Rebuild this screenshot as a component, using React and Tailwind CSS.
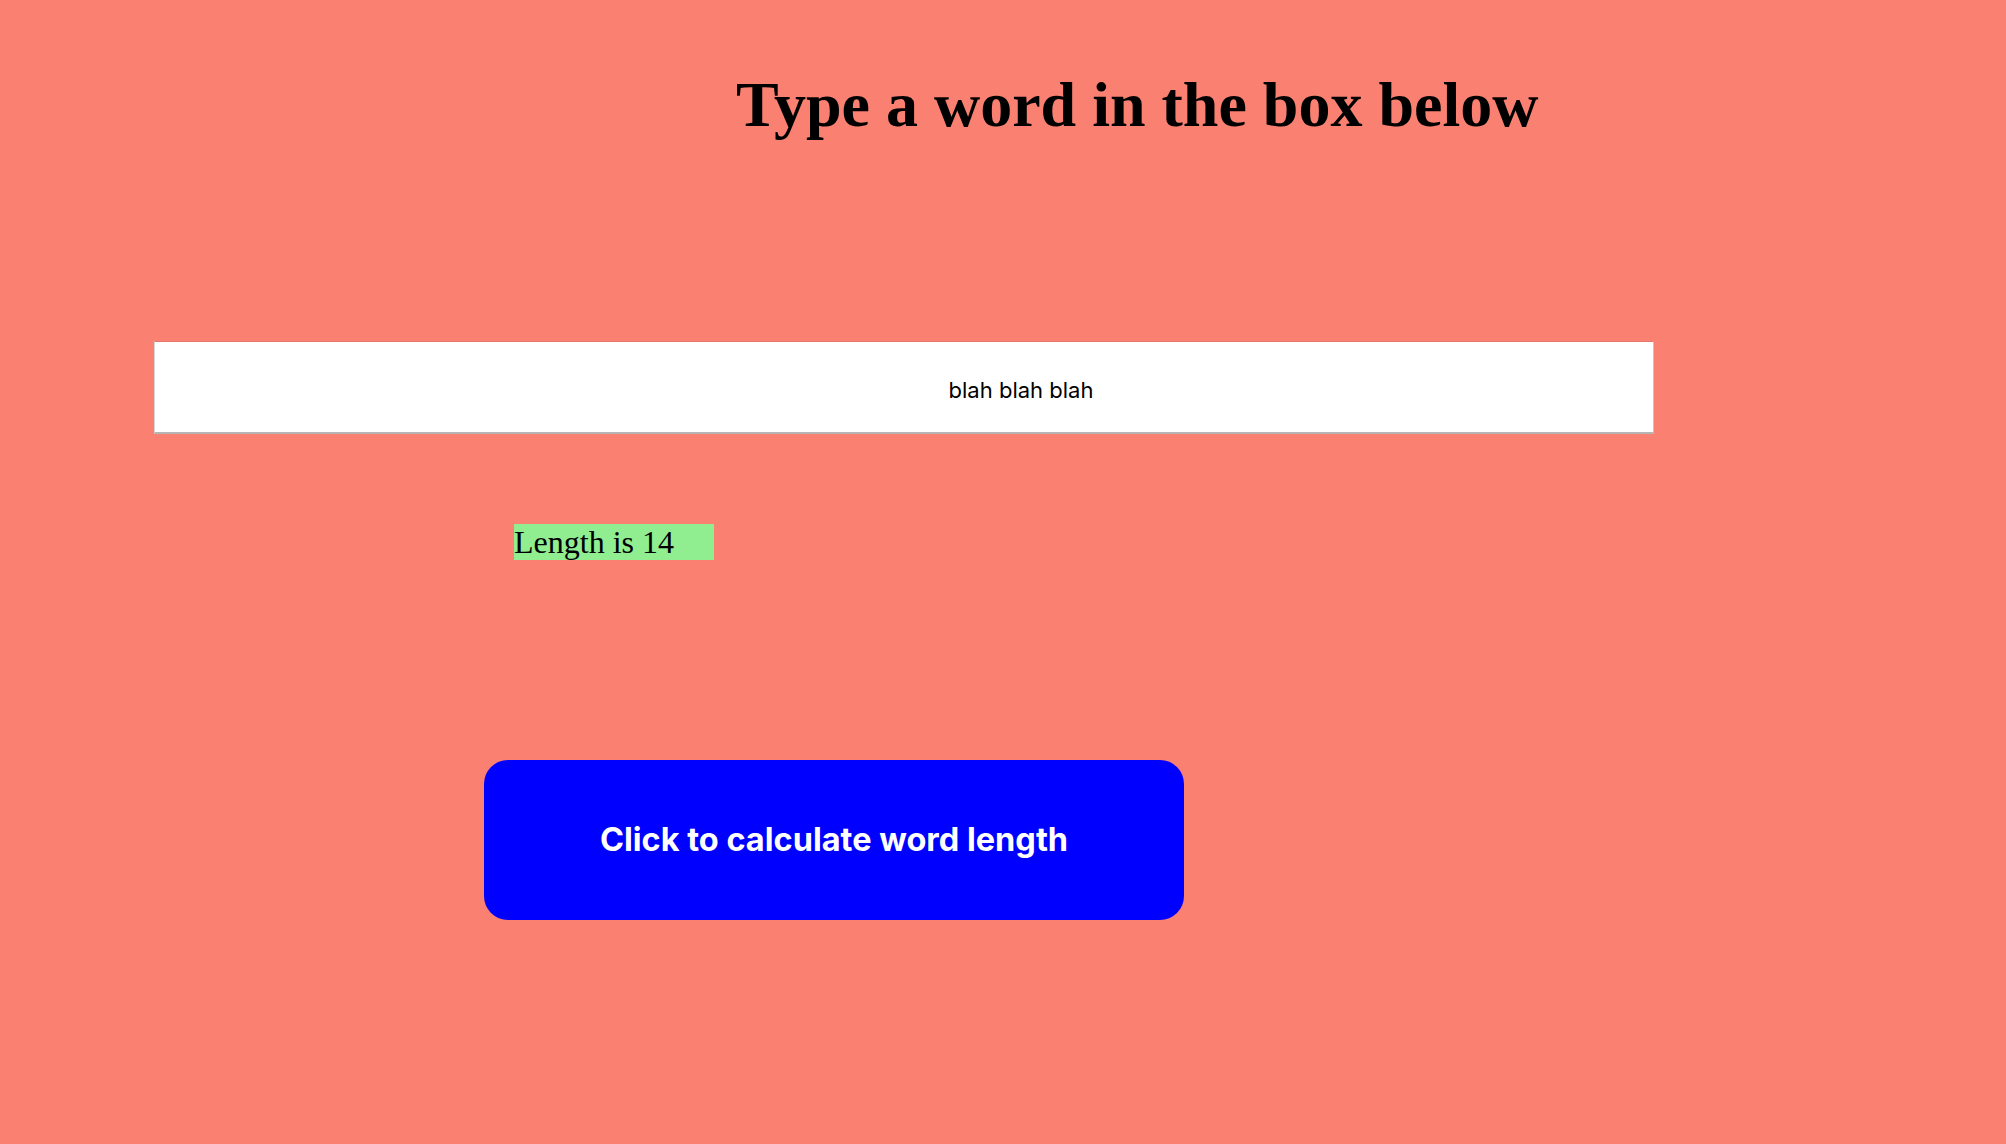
import { useState } from "react";

// Word length page: heading, text input, result label, and a big blue button

const App = () => {
  const [word, setWord] = useState("blah blah blah");
  const [length, setLength] = useState(14);

  return (
    <div className="w-full min-h-screen h-[1144px] bg-[#fa8072] flex flex-col items-start overflow-hidden">
      <h1 className="mt-[69px] ml-[736px] text-[64px] leading-[71px] font-bold text-black font-['Liberation_Serif',serif] whitespace-nowrap">
        Type a word in the box below
      </h1>

      <input
        type="text"
        value={word}
        onChange={(e) => setWord(e.target.value)}
        className="mt-[201px] ml-[154px] w-[1500px] h-[93px] bg-white border border-t-[#e9766a] border-l-[#d6d6d6] border-r-[#c4c4c4] border-b-2 border-b-[#b5b5b5] pl-[234px] pt-[6px] text-center text-[22px] text-black font-['Inter','Liberation_Sans',sans-serif] outline-none"
      />

      <div className="mt-[90px] ml-[514px] w-[200px] h-[36px] bg-[#90ee90] text-[32px] leading-[36px] text-black font-['Liberation_Serif',serif] whitespace-nowrap">
        Length is {length}
      </div>

      <button
        onClick={() => setLength(word.length)}
        className="mt-[200px] ml-[484px] w-[700px] h-[160px] rounded-[24px] bg-[#0000ff] text-white text-[32.5px] font-bold font-['Inter','Liberation_Sans',sans-serif] cursor-pointer"
      >
        Click to calculate word length
      </button>
    </div>
  );
};

export default App;
